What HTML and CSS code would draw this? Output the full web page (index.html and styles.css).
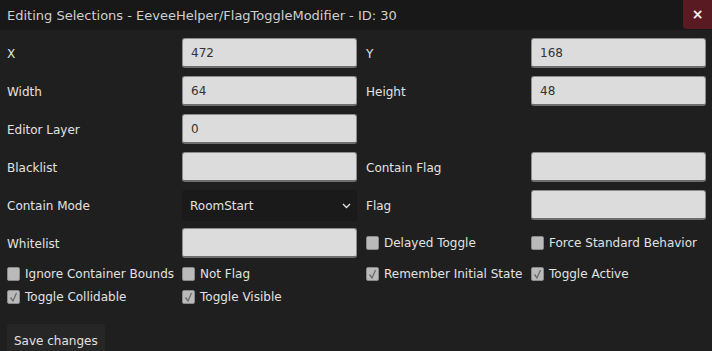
FILE: index.html
```html
<!DOCTYPE html>
<html>
<head>
<meta charset="utf-8">
<link rel="stylesheet" href="styles.css">
</head>
<body>
<div class="window">
  <div class="titlebar">
    <span class="title">Editing Selections - EeveeHelper/FlagToggleModifier - ID: 30</span>
    <button class="close">×</button>
  </div>
  <div class="body">
    <div class="grid">
      <label class="lbl">X</label><div class="field"><input class="inp" value="472"></div>
      <label class="lbl c3">Y</label><div class="field"><input class="inp" value="168"></div>

      <label class="lbl">Width</label><div class="field"><input class="inp" value="64"></div>
      <label class="lbl c3">Height</label><div class="field"><input class="inp" value="48"></div>

      <label class="lbl">Editor Layer</label><div class="field"><input class="inp" value="0"></div>
      <div class="c3"></div><div></div>

      <label class="lbl">Blacklist</label><div class="field"><input class="inp" value=""></div>
      <label class="lbl c3">Contain Flag</label><div class="field"><input class="inp" value=""></div>

      <label class="lbl">Contain Mode</label>
      <div class="field"><div class="select"><span>RoomStart</span><svg class="chev" width="9" height="6" viewBox="0 0 9 6"><path d="M1 1 L4.5 4.5 L8 1" fill="none" stroke="#e0e0e0" stroke-width="1.4"/></svg></div></div>
      <label class="lbl c3">Flag</label><div class="field"><input class="inp" value=""></div>

      <label class="lbl">Whitelist</label><div class="field"><input class="inp" value=""></div>
      <label class="chk c3"><span class="box"></span>Delayed Toggle</label>
      <label class="chk"><span class="box"></span>Force Standard Behavior</label>

      <label class="chk"><span class="box"></span>Ignore Container Bounds</label>
      <label class="chk"><span class="box"></span>Not Flag</label>
      <label class="chk c3"><span class="box on"><svg width="14" height="14" viewBox="0 0 14 14"><path d="M3.5 7.5 L6 11 L9.5 3" fill="none" stroke="#6a6a6a" stroke-width="1.3"/></svg></span>Remember Initial State</label>
      <label class="chk"><span class="box on"><svg width="14" height="14" viewBox="0 0 14 14"><path d="M3.5 7.5 L6 11 L9.5 3" fill="none" stroke="#6a6a6a" stroke-width="1.3"/></svg></span>Toggle Active</label>

      <label class="chk"><span class="box on"><svg width="14" height="14" viewBox="0 0 14 14"><path d="M3.5 7.5 L6 11 L9.5 3" fill="none" stroke="#6a6a6a" stroke-width="1.3"/></svg></span>Toggle Collidable</label>
      <label class="chk"><span class="box on"><svg width="14" height="14" viewBox="0 0 14 14"><path d="M3.5 7.5 L6 11 L9.5 3" fill="none" stroke="#6a6a6a" stroke-width="1.3"/></svg></span>Toggle Visible</label>
    </div>
    <button class="save">Save changes</button>
  </div>
</div>
</body>
</html>
```
FILE: styles.css
```css
html, body {
  margin: 0;
  padding: 0;
  background: #1f1f1f;
  overflow: hidden;
}
body {
  font-family: "DejaVu Sans", sans-serif;
  font-size: 12px;
  color: #e2e2e2;
}
.window {
  width: 712px;
  height: 351px;
  display: flex;
  flex-direction: column;
}
.titlebar {
  height: 30px;
  flex: none;
  background: #181818;
  display: flex;
  align-items: flex-start;
  justify-content: space-between;
}
.title {
  padding-left: 7px;
  font-size: 13px;
  line-height: 31px;
  color: #cfcfcf;
}
.close {
  width: 29px;
  height: 29px;
  border: none;
  padding: 0;
  background: #5a1a21;
  color: #f0f0f0;
  font-family: "DejaVu Sans", sans-serif;
  font-size: 14px;
  font-weight: bold;
  line-height: 27px;
  border-bottom-left-radius: 4px;
}
.body {
  padding: 8px 6px 0 7px;
  display: flex;
  flex-direction: column;
  align-items: flex-start;
}
.grid {
  display: grid;
  grid-template-columns: 175px 175px 174px 175px;
  grid-auto-rows: auto;
  row-gap: 8px;
  align-items: center;
}
.c3 {
  padding-left: 9px;
}
.lbl {
  line-height: 16px;
  padding-top: 1px;
}
.field {
  height: 30px;
}
.inp {
  box-sizing: border-box;
  width: 175px;
  height: 30px;
  margin: 0;
  padding: 1px 8px 0;
  background: #dcdcdc;
  border: 1px solid #8c8c8c;
  border-bottom: 2px solid #6e6e6e;
  border-radius: 3px;
  font-family: "DejaVu Sans", sans-serif;
  font-size: 12px;
  color: #333;
  outline: none;
}
.select {
  box-sizing: border-box;
  width: 175px;
  height: 31px;
  background: #1a1a1a;
  border-radius: 3px;
  display: flex;
  align-items: center;
  justify-content: space-between;
  padding: 1px 6px 0 8px;
  color: #e2e2e2;
}
.chev {
  display: block;
}
.chk {
  display: flex;
  align-items: center;
  gap: 5px;
  height: 15px;
  white-space: nowrap;
}
.box {
  box-sizing: border-box;
  width: 13px;
  height: 14px;
  flex: none;
  background: #bababa;
  border: 1px solid #8a8a8a;
  border-radius: 2px;
  display: flex;
  align-items: center;
  justify-content: center;
  overflow: hidden;
}
.box svg {
  display: block;
  flex: none;
}
.save {
  margin-top: 20px;
  height: 34px;
  padding: 0 7px;
  border: none;
  border-radius: 3px;
  background: #262626;
  color: #e2e2e2;
  font-family: "DejaVu Sans", sans-serif;
  font-size: 12px;
}
```
